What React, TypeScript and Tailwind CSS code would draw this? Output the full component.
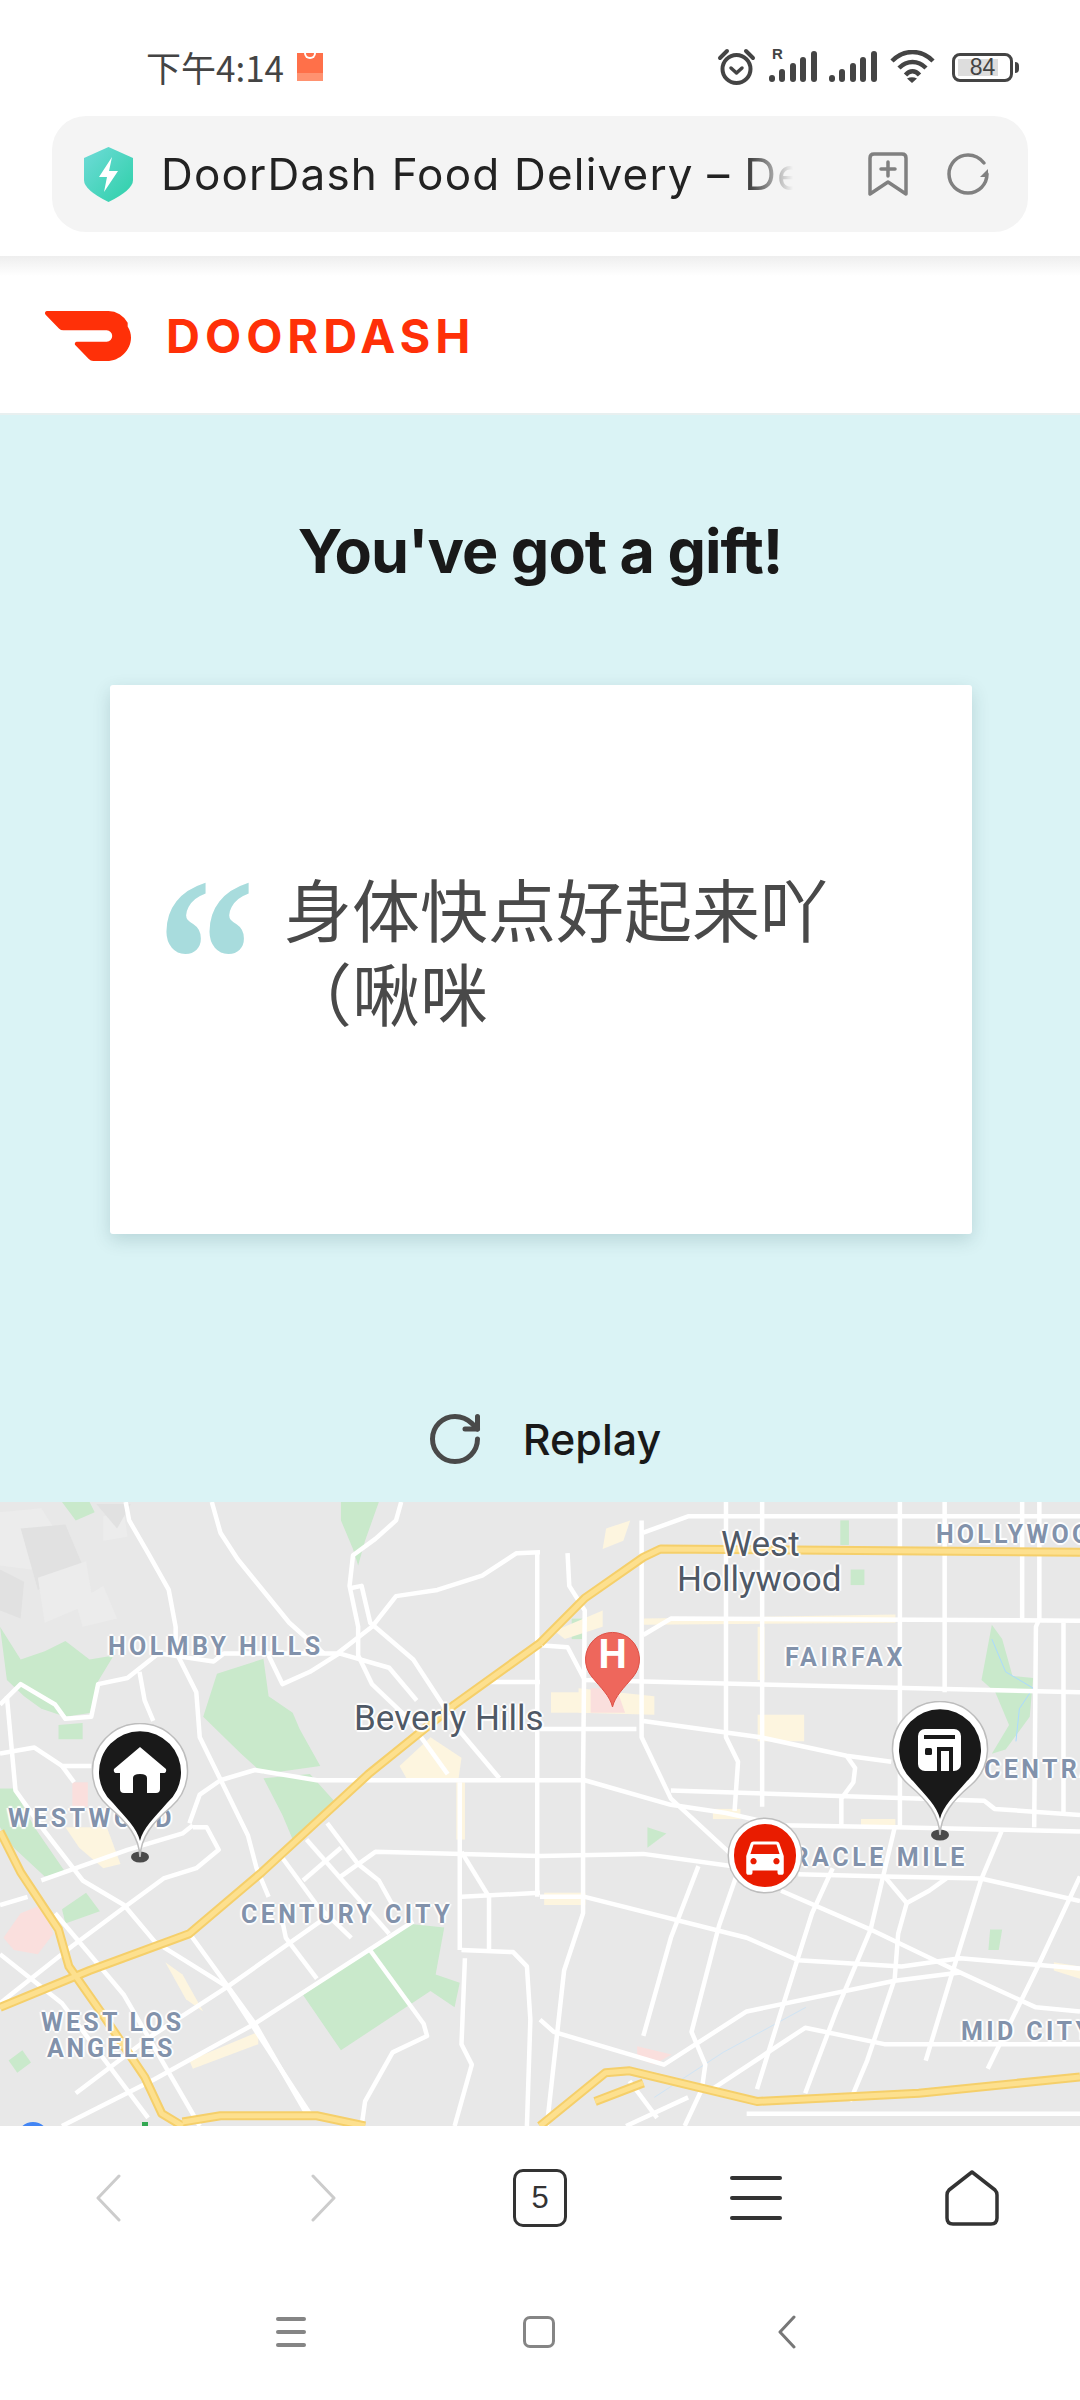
import React from 'react';
import { RotateCw } from 'lucide-react';
import { MdDirectionsCar } from 'react-icons/md';

const sans = "font-['Inter','Noto_Sans_CJK_SC',sans-serif]";

// map geometry, traced in a 3136x1560 grid that is squeezed onto the 1080x624 map
const parks = [
  '0,340 60,420 130,400 190,375 260,420 330,410 280,480 265,550 190,560 120,540 70,510 20,470',
  '630,455 765,418 780,510 850,550 870,590 930,680 765,700 700,650 590,560',
  '765,710 900,700 975,770 850,860 820,800',
  '180,1030 250,990 290,1035 190,1065',
  '1080,1125 1180,1065 1290,1075 1265,1190 1335,1210 1320,1270 1250,1230 990,1375 880,1240',
  '25,1400 65,1375 90,1405 50,1430',
  '990,35 1100,35 1060,130 1040,190 1025,150 990,80',
  '180,35 260,35 275,60 220,80',
  '0,735 40,735 100,830 190,940 130,950 40,880 0,830',
  '170,580 240,575 240,615 170,615',
  '1660,320 1690,320 1690,370 1660,370',
  '2440,80 2465,80 2465,140 2440,140',
  '2470,200 2510,200 2510,238 2470,238',
  '2880,335 2910,370 2940,460 3000,465 2990,560 2920,640 2880,650 2930,580 2890,500 2850,470',
  '1880,830 1935,845 1880,880',
  '2875,1080 2910,1080 2900,1130 2870,1130',
];

const tints = [
  '1160,680 1250,610 1340,660 1330,720 1180,710',
  '190,830 310,830 350,920 300,930 230,880',
  '550,1400 750,1330 750,1360 560,1420',
  '480,1160 530,1190 590,1280 540,1250',
  '1325,720 1350,720 1350,860 1325,860',
  '1610,350 1750,300 1750,340 1640,370',
  '1600,500 1720,500 1720,550 1600,550',
  '1680,490 1900,510 1900,555 1680,550',
  '2200,555 2335,555 2335,620 2200,620',
  '1760,100 1830,80 1810,130 1750,150',
  '1870,320 2600,310 2600,330 1870,335',
  '2200,340 2220,340 2220,470 2200,470',
  '2070,785 2150,785 2150,810 2070,810',
  '2500,810 2600,810 2600,830 2500,830',
  '1580,990 1700,990 1700,1020 1580,1020',
  '3060,1160 3136,1170 3136,1200 3060,1180',
];

const pinks = [
  '210,720 255,720 255,780 210,780',
  '10,1100 60,1040 120,1020 155,1090 110,1140 40,1130',
  '1715,490 1790,490 1815,550 1715,550',
  '1850,1365 1950,1385 1900,1410 1850,1395',
];

const terrain = [
  '0,60 120,50 180,130 90,200 0,190',
  '60,100 190,90 240,190 110,250',
  '300,70 360,60 370,120 300,130',
  '0,200 70,230 60,320 0,300',
  '110,220 250,180 270,280 130,330',
  '280,40 380,40 340,100',
  '220,280 300,240 340,320 240,340',
];

const roads = [
  '365,35 375,80 430,160 490,250 510,340 510,400 570,500 580,610 720,850 745,930 780,1000',
  '615,35 640,110 690,175 840,330 940,405',
  '1165,35 1150,80 1090,125 1025,165 1015,240 1040,340 1040,410 1080,480 1180,560 1300,700',
  '1020,245 1050,240 1075,330 1200,420 1340,600 1450,710',
  '0,530 60,480 160,530 190,565 265,560 285,480 370,465 460,405 620,425 650,405 980,405 1080,340 1150,265 1270,250 1400,215 1500,160 1568,158',
  '780,410 820,480 900,450 985,405 1130,440 1210,520',
  '405,450 420,520 445,570',
  '20,510 45,740 130,840 240,960 360,1020 450,1110 660,1220 900,1530',
  '0,650 100,635 180,680 265,680',
  '180,680 215,720',
  '560,830 600,830 635,885 570,930 475,955 370,1020 210,1120 30,1240 0,1260',
  '550,820 580,750 640,715 740,690 920,715 1568,715',
  '120,960 370,885 530,845 560,825',
  '0,1020 80,1000',
  '820,905 920,1020 1020,1100',
  '890,860 1130,1090',
  '950,820 1040,920 1100,960 1140,1020',
  '880,960 990,880',
  '990,950 1090,890 1568,900',
  '1335,720 1335,1130',
  '1420,1000 1420,1130',
  '1340,1000 1568,990',
  '1340,1130 1490,1135 1530,1170 1540,1300 1530,1560',
  '1340,890 1420,1000',
  '1560,160 1560,1000',
  '1420,475 1568,475',
  '555,1095 740,1310 890,1530',
  '820,1060 830,1100 920,1200',
  '1070,1125 1230,1310 1240,1340 1140,1380 1060,1500 1050,1560',
  '1200,1060 740,1310 450,1445 180,1560',
  '930,1060 660,1220 440,1340 220,1480',
  '1320,1560 1370,1410 1340,1360 1350,1150',
  '0,1140 180,1260 430,1540',
  '160,1040 360,1240 580,1560',
  // east half
  '1648,160 1653,240 1698,300 1693,700 1693,1040 1638,1180 1588,1560',
  '1863,80 1863,610 1948,760 2128,900',
  '2108,35 2108,610 2143,670 2133,790',
  '2213,35 2213,780',
  '2613,35 2613,830',
  '2743,35 2743,500',
  '2968,35 2968,320',
  '3018,35 3018,320 3008,340 3003,830',
  '3088,330 3088,800',
  '1868,110 1998,70 3136,70',
  '1868,360 1948,320 3136,325',
  '1568,385 1648,390 1698,470 3136,500',
  '1568,590 1848,590',
  '1868,570 2208,610 2458,655 2588,670',
  '2458,655 2483,685 2478,720 2443,760 2443,830',
  '1568,715 1698,715 1948,775 2108,795 2268,825 2598,830 3136,840',
  '1948,740 2858,765 2888,785 3136,800',
  '1568,900 1868,895 2128,925',
  '2318,945 2568,950 2848,955 3136,1010',
  '1568,1000 1698,1000 2168,1100 2318,1155 2618,1170 2788,1150 3136,1175',
  '2268,985 2528,1080 2788,1185 3008,1270 3136,1280',
  '2748,955 2698,985 2633,1015 2568,950',
  '2633,1015 2608,1090 2598,1200 2518,1400 2468,1500',
  '2908,840 2848,960 2778,1150 2688,1400',
  '3136,950 3008,1180 2868,1420',
  '2148,925 2088,1070 2008,1330 2048,1410 2038,1470 1988,1560',
  '2028,925 1948,1100 1868,1340',
  '2418,930 2358,1040 2268,1280 2198,1470',
  '2598,830 2528,1080 2428,1280 2338,1480',
  '1568,1300 1608,1330 1928,1410 2168,1280 2598,1205 2788,1185',
  '2068,1470 2338,1320 2568,1360 3136,1360',
  '1828,1450 1908,1540',
  '1998,1490 1818,1560',
  '2168,1530 3136,1530',
];

const highways = [
  '1568,380 1320,530 1070,700 760,940 550,1090 260,1180 0,1270',
  '0,840 60,940 170,1080 200,1170 300,1290 420,1440 470,1530 530,1560',
  '530,1550 640,1535 920,1535 1060,1560',
  '1568,380 1698,270 1868,170 1918,150 3136,158',
  '1568,1560 1758,1430 1828,1425 2198,1500 2668,1480 3136,1440',
  '1728,1500 1868,1455',
];

const MapLayer = () => (
  <svg className="absolute inset-0" width="1080" height="624" viewBox="0 35 3136 1525" preserveAspectRatio="none">
    {terrain.map((p, i) => <polygon key={i} points={p} fill={i % 2 ? '#e1e1e1' : '#ececec'} />)}
    {parks.map((p, i) => <polygon key={i} points={p} fill="#c9e9cb" />)}
    {tints.map((p, i) => <polygon key={i} points={p} fill="#fdf5df" />)}
    {pinks.map((p, i) => <polygon key={i} points={p} fill="#fadfdd" />)}
    <polyline points="2880,370 2920,450 3000,490 2960,540 2950,620" fill="none" stroke="#aadaff" strokeWidth="1" vectorEffect="non-scaling-stroke" />
    <polyline points="1900,1490 2100,1380 2340,1270" fill="none" stroke="#cfe4f5" strokeWidth="1" vectorEffect="non-scaling-stroke" />
    {roads.map((p, i) => (
      <polyline key={i} points={p} fill="none" stroke="#ffffff" strokeWidth="4.500" strokeLinejoin="round" vectorEffect="non-scaling-stroke" />
    ))}
    {highways.map((p, i) => (
      <polyline key={i} points={p} fill="none" stroke="#f5cf6a" strokeWidth="9" strokeLinejoin="round" vectorEffect="non-scaling-stroke" />
    ))}
    {highways.map((p, i) => (
      <polyline key={i} points={p} fill="none" stroke="#fde08e" strokeWidth="5" strokeLinejoin="round" vectorEffect="non-scaling-stroke" />
    ))}
  </svg>
);

const halo = '[text-shadow:-2px_0_1px_#fff,2px_0_1px_#fff,0_-2px_1px_#fff,0_2px_1px_#fff]';

const Area = ({ x, y, spacing, children }: { x: number; y: number; spacing: string; children: React.ReactNode }) => (
  <div
    className={`absolute font-['Roboto',sans-serif] font-bold text-[25px] leading-[28px] whitespace-nowrap text-[#8292ab] ${spacing} ${halo}`}
    style={{ left: x, top: y }}
  >
    {children}
  </div>
);

const City = ({ x, y, children }: { x: number; y: number; children: React.ReactNode }) => (
  <div
    className={`absolute font-['Roboto',sans-serif] text-[35px] leading-[40px] whitespace-nowrap text-[#4f5966] ${halo}`}
    style={{ left: x, top: y }}
  >
    {children}
  </div>
);

const DropPin = ({ x, y, children }: { x: number; y: number; children: React.ReactNode }) => (
  <svg className="absolute" style={{ left: x, top: y }} width="98" height="140" viewBox="0 0 98 140">
    <ellipse cx="49" cy="134" rx="9" ry="5.5" fill="#4a4a4a" />
    <path d="M49 134C48 114 37 100 18 84A47.500 47.500 0 1 1 80 84C61 100 50 114 49 134Z" fill="#ffffff" stroke="#bdbdbd" strokeWidth="1.500" />
    <path d="M49 118C46 105 35 95 22 80A41 41 0 1 1 76 80C63 95 52 105 49 118Z" fill="#191919" />
    {children}
  </svg>
);

const MapSection = () => (
  <div className="relative h-[624px] w-full overflow-hidden bg-[#e8e8e8]">
    <MapLayer />
    <Area x={108} y={131} spacing="tracking-[3.4px]">HOLMBY HILLS</Area>
    <Area x={8} y={303} spacing="tracking-[3.4px]">WESTWOOD</Area>
    <Area x={241} y={399} spacing="tracking-[3.4px]">CENTURY CITY</Area>
    <Area x={41} y={507} spacing="tracking-[3.2px]">WEST LOS</Area>
    <Area x={47} y={533} spacing="tracking-[2.8px]">ANGELES</Area>
    <Area x={936} y={19} spacing="tracking-[3.2px]">HOLLYWOOD</Area>
    <Area x={785} y={142} spacing="tracking-[3.6px]">FAIRFAX</Area>
    <Area x={984} y={254} spacing="tracking-[3.4px]">CENTRAL</Area>
    <Area x={756} y={342} spacing="tracking-[3.6px]">MIRACLE MILE</Area>
    <Area x={961} y={516} spacing="tracking-[3.4px]">MID CITY</Area>
    <City x={354} y={197}>Beverly Hills</City>
    <City x={721} y={23}>West</City>
    <City x={677} y={58}>Hollywood</City>

    <DropPin x={91} y={221}>
      <path d="M49 24L75 46Q76 50 72 50H69V66Q69 70 65 70H56V55Q56 51 49 51Q42 51 42 55V70H33Q29 70 29 66V50H26Q22 50 23 46Z" fill="#ffffff" />
    </DropPin>
    <DropPin x={891} y={199}>
      <rect x="27" y="28" width="43" height="42" rx="7" fill="#ffffff" />
      <rect x="33" y="34" width="31" height="4" fill="#191919" />
      <rect x="34" y="47" width="7" height="7" rx="1.500" fill="#191919" />
      <path d="M46 70V46H62V70H58V50H50V70Z" fill="#191919" />
    </DropPin>

    {/* hospital marker */}
    <div className="absolute left-[585px] top-[126px] w-[55px] h-[80px]">
      <svg className="absolute inset-0" width="55" height="80" viewBox="0 0 55 80">
        <path d="M27.500 79C25 68 16 60 7 49A27 27 0 1 1 48 49C39 60 30 68 27.500 79Z" fill="#ee675c" stroke="#dd5046" strokeWidth="1" />
      </svg>
      <div className="relative w-full text-center font-['Roboto',sans-serif] font-bold text-[40px] leading-[54px] text-white">H</div>
    </div>

    {/* driver marker */}
    <div className="absolute left-[729px] top-[317px] w-[72px] h-[73px] rounded-full bg-[#e91c00] border-[5px] border-white shadow-[0_0_0_1.500px_#bdbdbd] flex items-center justify-center">
      <MdDirectionsCar size={50} color="#ffffff" />
    </div>

    {/* Google logo, cut off by the toolbar */}
    <div className="absolute left-[17px] top-[620px] w-[32px] h-[32px] rounded-full border-[5px] border-[#4285f4]" />
    <div className="absolute left-[142px] top-[620px] w-[6px] h-[4px] bg-[#34a853]" />
  </div>
);

const Bars = () => (
  <svg width="48" height="32" viewBox="0 0 48 32" fill="#444444">
    <rect x="0" y="24" width="6" height="7" rx="3" />
    <rect x="10" y="18" width="6" height="13" rx="3" />
    <rect x="21" y="12" width="6" height="19" rx="3" />
    <rect x="31" y="6" width="6" height="25" rx="3" />
    <rect x="42" y="0" width="6" height="31" rx="3" />
  </svg>
);

const StatusBar = () => (
  <div className="h-[116px] flex items-center justify-between pl-[146px] pr-[61px] pt-[22px] pb-[4px]">
    <div className="flex items-center gap-[13px]">
      <span className="font-['Noto_Sans_CJK_SC','Noto_Sans',sans-serif] text-[35px] leading-[40px] text-[#444444]">下午4:14</span>
      <div className="w-[26px] h-[28px] bg-[#ff7049] relative">
        <div className="absolute left-0 right-0 bottom-0 h-[8px] bg-[#ff9270]" />
        <div className="absolute left-[7px] top-0 w-[12px] h-[6px] border-b-2 border-x-2 border-white rounded-b-full" />
      </div>
    </div>
    <div className="flex items-center">
      <svg width="39" height="38" viewBox="0 0 39 38" fill="none" stroke="#444444" strokeLinecap="round">
        <circle cx="19.500" cy="21" r="14" strokeWidth="4" />
        <path d="M14 20L19.500 25L25 20" strokeWidth="3.500" strokeLinejoin="round" />
        <path d="M3 10L10 3M36 10L29 3" strokeWidth="4" />
      </svg>
      <div className="relative ml-[13px]">
        <span className="absolute left-[3px] -top-[5px] font-['Liberation_Sans',sans-serif] font-bold text-[15px] leading-[16px] text-[#444444]">R</span>
        <Bars />
      </div>
      <div className="ml-[12px]"><Bars /></div>
      <svg className="ml-[13px]" width="45" height="34" viewBox="0 0 45 34" fill="none" stroke="#444444" strokeWidth="4.500">
        <path d="M2 11C14 -1 31 -1 43 11" />
        <path d="M9 18C17 10 28 10 36 18" />
        <path d="M15.500 25C20 20 25 20 29.500 25" />
        <path d="M22 33L17 28.500Q22 26 27 28.500Z" fill="#444444" stroke="none" />
      </svg>
      <div className="ml-[17px] flex items-center">
        <div className="w-[61px] h-[29px] rounded-[8px] border-[3px] border-[#444444] p-[3px] relative">
          <div className="h-full w-[40px] bg-[#dddddd]" />
          <span className="absolute inset-0 text-center font-['Liberation_Sans',sans-serif] text-[23px] leading-[23px] text-[#444444]">84</span>
        </div>
        <div className="ml-[2px] w-[4px] h-[11px] rounded-r-full bg-[#444444]" />
      </div>
    </div>
  </div>
);

const AddressBar = () => (
  <div className="h-[116px] mx-[52px] rounded-[34px] bg-[#f4f4f4] flex items-center pl-[32px]">
    <svg width="49" height="55" viewBox="0 0 49 55">
      <defs>
        <linearGradient id="shield" x1="0" y1="0" x2="1" y2="1">
          <stop offset="0" stopColor="#6fdbd8" />
          <stop offset="1" stopColor="#2dd0a8" />
        </linearGradient>
      </defs>
      <path d="M24.500 0L49 11V33Q49 43 24.500 55Q0 43 0 33V11Z" fill="url(#shield)" />
      <path d="M28 10L15 30H23L20 45L34 24H25Z" fill="#ffffff" />
    </svg>
    <div className={`ml-[28px] w-[632px] overflow-hidden whitespace-nowrap ${sans} text-[44px] leading-[56px] tracking-[1.2px] text-[#222222] [mask-image:linear-gradient(to_right,#000_92%,transparent_100%)]`}>
      DoorDash Food Delivery – Delivery
    </div>
    <svg className="ml-[75px]" width="40" height="44" viewBox="0 0 40 44" fill="none" stroke="#808080" strokeWidth="3.500" strokeLinejoin="round" strokeLinecap="round">
      <path d="M2 42V6Q2 2 6 2H34Q38 2 38 6V42L20 30Z" />
      <path d="M20 10V24M13 17H27" />
    </svg>
    <svg className="ml-[39px]" width="43" height="42" viewBox="0 0 43 42" fill="none" stroke="#808080" strokeWidth="3.500" strokeLinecap="round">
      <path d="M40 21A19 19 0 1 1 21 2C28 2 33 5 37 10" />
      <path d="M41 16L33 24H41Z" fill="#808080" stroke="none" />
    </svg>
  </div>
);

const Toolbar = () => (
  <div className="h-[144px] bg-white grid grid-cols-5 items-center justify-items-center">
    <svg width="26" height="48" viewBox="0 0 26 48" fill="none" stroke="#cccccc" strokeWidth="3" strokeLinecap="round" strokeLinejoin="round">
      <path d="M24 2L3 24L24 46" />
    </svg>
    <svg width="26" height="48" viewBox="0 0 26 48" fill="none" stroke="#cccccc" strokeWidth="3" strokeLinecap="round" strokeLinejoin="round">
      <path d="M2 2L23 24L2 46" />
    </svg>
    <div className="w-[54px] h-[58px] rounded-[10px] border-[3px] border-[#333333] flex items-center justify-center font-['Liberation_Sans',sans-serif] text-[31px] text-[#333333]">5</div>
    <div className="w-[52px] flex flex-col gap-[16px]">
      <div className="h-[4px] bg-[#333333] rounded-full" />
      <div className="h-[4px] bg-[#333333] rounded-full" />
      <div className="h-[4px] bg-[#333333] rounded-full" />
    </div>
    <svg width="54" height="56" viewBox="0 0 54 56" fill="none" stroke="#333333" strokeWidth="3.500" strokeLinejoin="round">
      <path d="M27 2L50 20Q52 22 52 25V48Q52 54 46 54H8Q2 54 2 48V25Q2 22 4 20Z" />
    </svg>
  </div>
);

const NavBar = () => (
  <div className="flex-1 bg-white grid grid-cols-[248px_248px_248px] justify-start items-center pl-[167px] pb-[6px]">
    <div className="justify-self-center w-[30px] flex flex-col gap-[9px]">
      <div className="h-[4px] bg-[#858585] rounded-full" />
      <div className="h-[4px] bg-[#858585] rounded-full" />
      <div className="h-[4px] bg-[#858585] rounded-full" />
    </div>
    <div className="justify-self-center w-[32px] h-[32px] rounded-[7px] border-[3px] border-[#858585]" />
    <svg className="justify-self-center" width="20" height="34" viewBox="0 0 20 34" fill="none" stroke="#777777" strokeWidth="3" strokeLinecap="round" strokeLinejoin="round">
      <path d="M17 2L3 17L17 32" />
    </svg>
  </div>
);

export default function App() {
  return (
    <div className="w-[1080px] h-[2400px] overflow-hidden bg-white flex flex-col">
      <div className="h-[256px] bg-white shrink-0">
        <StatusBar />
        <AddressBar />
      </div>

      <div className="relative h-[159px] shrink-0 bg-white flex items-center pl-[45px] border-b-2 border-[#e8f0f0]">
        <div className="absolute left-0 right-0 top-0 h-[20px] bg-gradient-to-b from-[#eeeeee] to-white" />
        <svg className="mt-[3px]" width="86" height="50" viewBox="0 5.180 24 13.640" preserveAspectRatio="none">
          <path d="M23.071 8.409a6.090 6.090 0 0 0-5.396-3.228H.584A.589.589 0 0 0 .170 6.184L3.894 9.930a1.752 1.752 0 0 0 1.242.516h12.049a1.554 1.554 0 1 1 .031 3.108H8.910a.589.589 0 0 0-.415 1.003l3.725 3.747a1.750 1.750 0 0 0 1.242.516h3.757c4.887 0 8.584-5.225 5.852-9.411" fill="#ff3008" />
        </svg>
        <span className={`ml-[35px] mt-[3px] ${sans} font-bold text-[47px] leading-[50px] tracking-[5px] text-[#ff3008]`}>DOORDASH</span>
      </div>

      <div className="h-[1087px] shrink-0 bg-[#daf3f5] flex flex-col items-center">
        <h1 className={`mt-[102px] ${sans} font-bold text-[61px] leading-[68px] tracking-[-1px] text-[#191919]`}>You've got a gift!</h1>
        <div className="mt-[100px] ml-[2px] w-[862px] h-[549px] bg-white rounded-[3px] shadow-[0_6px_18px_rgba(0,60,70,0.16)] flex items-center pl-[47px] pb-[20px]">
          <div className="w-[127px] h-[168px] shrink-0 self-center overflow-visible font-['Liberation_Serif',serif] font-bold text-[196px] leading-[184px] scale-y-[1.2] text-[#a8dcdd]">“</div>
          <p className="w-[560px] font-['Noto_Sans_CJK_SC',sans-serif] font-normal text-[68px] leading-[84px] text-[#494949]">身体快点好起来吖（啾咪</p>
        </div>
        <div className="mt-[175px] flex items-center pl-[6px]">
          <RotateCw size={60} strokeWidth={2} color="#494949" />
          <span className={`ml-[38px] ${sans} font-medium text-[43px] leading-[52px] text-[#191919]`}>Replay</span>
        </div>
      </div>

      <MapSection />
      <Toolbar />
      <NavBar />
    </div>
  );
}
